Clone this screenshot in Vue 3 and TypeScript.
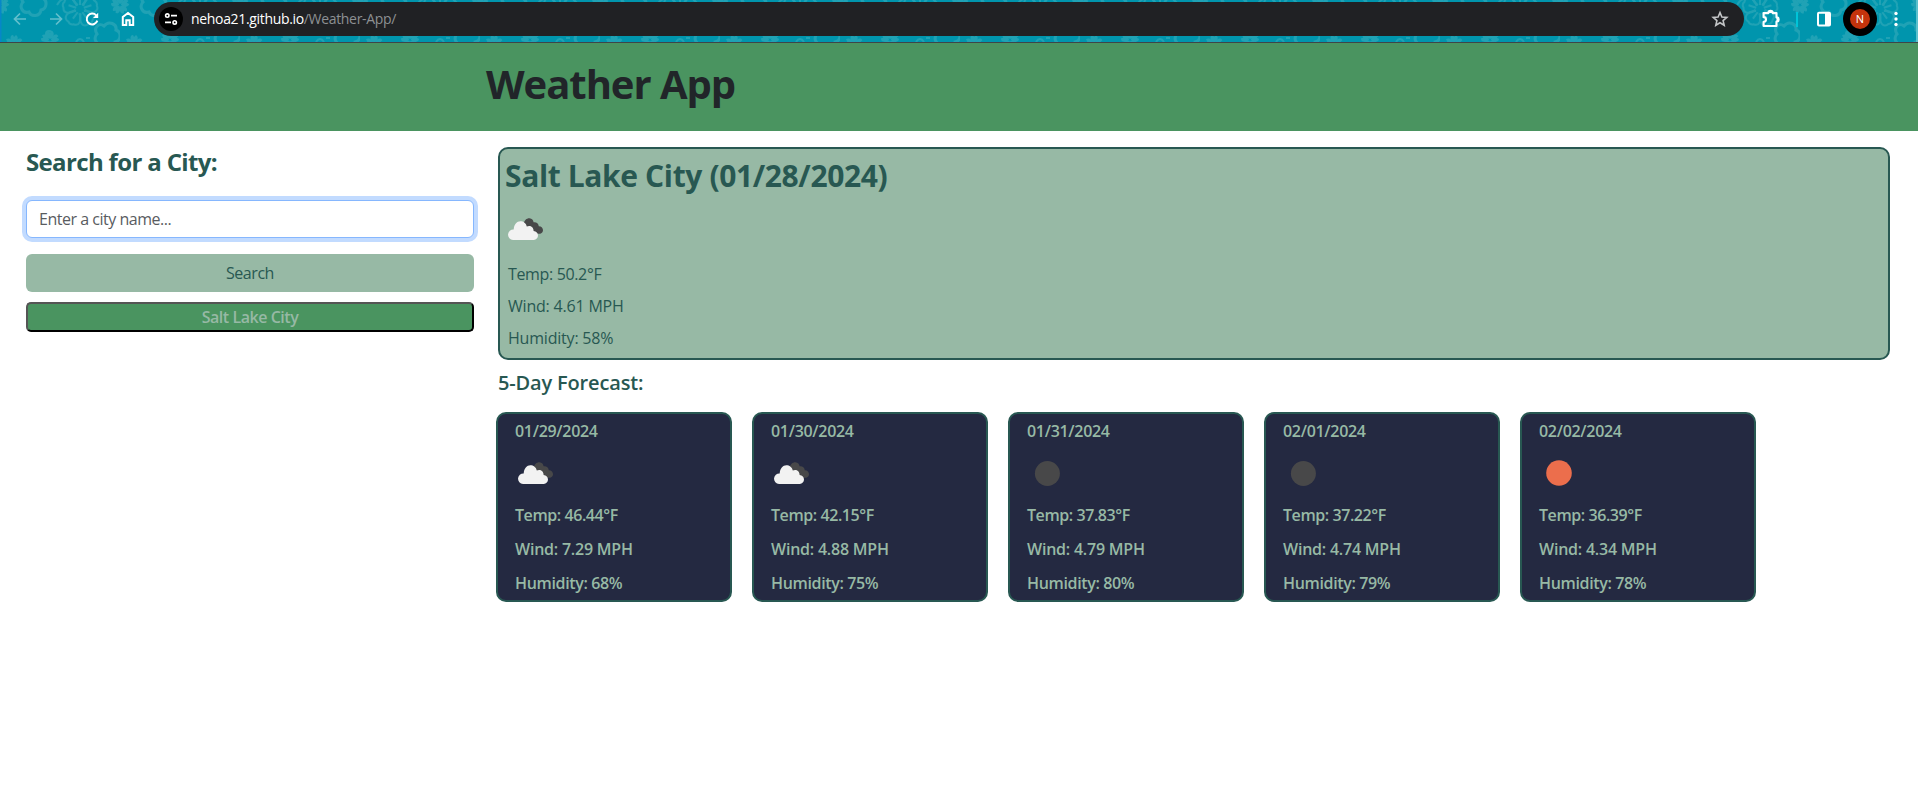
<script setup lang="ts">
interface Reading {
  date: string
  icon: 'clouds' | 'night' | 'day'
  temp: string
  wind: string
  humidity: string
}

const current = { city: 'Salt Lake City', date: '01/28/2024', temp: '50.2', wind: '4.61', humidity: '58' }

const forecast: Reading[] = [
  { date: '01/29/2024', icon: 'clouds', temp: '46.44', wind: '7.29', humidity: '68' },
  { date: '01/30/2024', icon: 'clouds', temp: '42.15', wind: '4.88', humidity: '75' },
  { date: '01/31/2024', icon: 'night', temp: '37.83', wind: '4.79', humidity: '80' },
  { date: '02/01/2024', icon: 'night', temp: '37.22', wind: '4.74', humidity: '79' },
  { date: '02/02/2024', icon: 'day', temp: '36.39', wind: '4.34', humidity: '78' },
]

const petals = [0, 72, 144, 216, 288]
</script>

<template>
  <div class="page">
    <div class="toolbar">
      <svg class="floral" width="1918" height="42" aria-hidden="true">
        <defs>
          <g id="hibiscus" fill="none" stroke="#20a2b5" stroke-width="2">
            <path v-for="a in petals" :key="a" :transform="`rotate(${a})`" d="M-2-4C-9-8-9-15-4-16Q-1-19 2-17C8-18 10-10 2-4M0-4V-12" />
          </g>
          <g id="blossom" fill="none" stroke="#20a2b5" stroke-width="3">
            <path d="M-3-10C2-16 10-12 9-6C15-4 14 5 8 6C7 13-2 13-4 8C-11 10-14 2-10-2C-14-8-8-14-3-10Z" />
          </g>
          <g id="sprig" fill="#20a2b5">
            <path v-for="a in petals" :key="a" :transform="`rotate(${a})`" d="M0-1C-5-4-4-9-1-9L0-7L2-9C5-7 4-3 0-1Z" />
          </g>
          <pattern id="print" width="120" height="42" patternUnits="userSpaceOnUse">
            <use href="#blossom" x="33" y="4" />
            <use href="#hibiscus" x="80" y="9" />
            <use href="#sprig" x="0" y="5" />
            <use href="#sprig" x="120" y="5" />
            <use href="#blossom" x="107" y="36" />
            <use href="#sprig" x="50" y="40" />
            <use href="#sprig" x="14" y="44" />
            <circle cx="49" cy="34" r="3" fill="none" stroke="#20a2b5" stroke-width="2" />
            <path d="M76 42q4-6 8 0M57 5q3-5 6-6M86 38h4" fill="none" stroke="#20a2b5" stroke-width="2" />
          </pattern>
        </defs>
        <rect width="1918" height="42" fill="#0095ad" />
        <rect width="1918" height="42" fill="url(#print)" />
        <rect width="1.5" height="42" fill="#0787c8" />
        <rect x="1916" width="2" height="42" fill="#5bc0cc" />
      </svg>

      <div class="nav">
        <svg class="dim" width="16" height="16" viewBox="0 0 16 16"><path d="M14 8H3M8 2.5L2.5 8L8 13.5" /></svg>
        <svg class="dim" width="16" height="16" viewBox="0 0 16 16"><path d="M2 8H13M8 2.5L13.5 8L8 13.5" /></svg>
        <svg width="16" height="16" viewBox="0 0 16 16">
          <path d="M13.3 9.6A5.4 5.4 0 1 1 12.2 4.4L13.4 5.8" stroke-width="2" />
          <path d="M14.2 1.8V7H9Z" fill="#fff" stroke="none" />
        </svg>
        <svg width="16" height="16" viewBox="0 0 16 16"><path d="M2.8 14V6L8 2L13.2 6V14H9.7V9.2H6.3V14Z" stroke-width="2" /></svg>
      </div>

      <div class="address">
        <span class="site">
          <svg width="14" height="14" viewBox="0 0 14 14" fill="none" stroke="#fff" stroke-width="1.6">
            <circle cx="3.3" cy="3.6" r="1.7" /><path d="M7 3.6H13M1 10.4H7" /><circle cx="10.7" cy="10.4" r="1.7" />
          </svg>
        </span>
        <span class="url"><b>nehoa21.github.io</b><i>/Weather-App/</i></span>
        <svg class="star" width="18" height="18" viewBox="0 0 18 18">
          <path d="M9 2.5L10.9 7L15.8 7.4L12.1 10.6L13.2 15.3L9 12.8L4.8 15.3L5.9 10.6L2.2 7.4L7.1 7Z" fill="none" stroke="#c4c6c8" stroke-width="1.6" />
        </svg>
      </div>

      <div class="actions">
        <svg width="20" height="20" viewBox="0.6 1.2 18.6 18.6">
          <path d="M3 5H7.5A2 2 0 0 1 11.5 5H15V9A2 2 0 0 1 15 13V17H3V13.2A2.2 2.2 0 0 0 3 8.8Z" fill="none" stroke="#fff" stroke-width="2" stroke-linejoin="round" />
          <path d="M7.5 5a2 2 0 0 1 4 0zM15 9a2 2 0 0 1 0 4z" fill="#fff" />
        </svg>
        <span class="divider"></span>
        <svg width="16" height="16" viewBox="0 0 16 16">
          <rect x="2" y="1.8" width="12" height="12.6" rx="1" fill="none" stroke="#fff" stroke-width="2" /><path d="M9 2H14V14H9Z" fill="#fff" />
        </svg>
        <span class="profile"><span>N</span></span>
        <svg width="4" height="16" viewBox="0 0 4 16" fill="#fff"><circle cx="2" cy="2.5" r="1.7" /><circle cx="2" cy="8" r="1.7" /><circle cx="2" cy="13.5" r="1.7" /></svg>
      </div>
    </div>

    <header class="banner"><h1>Weather App</h1></header>

    <svg width="0" height="0" class="defs" aria-hidden="true">
      <defs>
        <g id="clouds">
          <path d="M15.5 6.5C16 2 19 0 21.5.2C24 .4 25.3 2 25.6 4.3C28 3.8 30.5 5.2 30.8 8.2C33.5 8.2 35.2 10.3 35 12.4C34.8 14.8 32.5 16.2 29.8 15.8L15.5 12Z" fill="#484849" />
          <path d="M5 22A5.3 5.3 0 0 1 5.7 11.4C5.9 6.5 9 3.2 12.3 3.2C15.5 3.2 18.2 5.2 18.8 8.6C22 7 25.6 9 25.6 13C28.3 13 30 15.2 30 17.6C30 20 28.2 22 25.8 22Z" fill="#f2f2f2" />
        </g>
      </defs>
    </svg>

    <main class="content">
      <aside class="search">
        <h2>Search for a City:</h2>
        <input type="text" placeholder="Enter a city name..." />
        <button class="submit" type="button">Search</button>
        <button class="history" type="button">Salt Lake City</button>
      </aside>

      <section class="results">
        <article class="today">
          <h2>{{ current.city }} ({{ current.date }})</h2>
          <svg class="icon" width="36" height="23"><use href="#clouds" /></svg>
          <p class="temp">Temp: {{ current.temp }}°F</p>
          <p class="wind">Wind: {{ current.wind }} MPH</p>
          <p class="humidity">Humidity: {{ current.humidity }}%</p>
        </article>
        <h3>5-Day Forecast:</h3>
        <div class="days">
          <article v-for="day in forecast" :key="day.date" class="day">
            <p class="date">{{ day.date }}</p>
            <svg class="icon" width="36" height="28">
              <use v-if="day.icon === 'clouds'" href="#clouds" y="2" />
              <circle v-else-if="day.icon === 'night'" cx="17.4" cy="13.5" r="12.5" fill="#484849" />
              <circle v-else cx="17" cy="13" r="12.8" fill="#ec6e4c" />
            </svg>
            <p class="temp">Temp: {{ day.temp }}°F</p>
            <p class="wind">Wind: {{ day.wind }} MPH</p>
            <p class="humidity">Humidity: {{ day.humidity }}%</p>
          </article>
        </div>
      </section>
    </main>
  </div>
</template>

<style>
body { margin: 0; background: #fff; }
</style>

<style scoped>
* { box-sizing: border-box; }
.page { height: 793px; overflow: hidden; font-family: "Open Sans", "Noto Sans", sans-serif; font-size: 16px; line-height: 24px; color: #285852; background: #fff; }
h1, h2, h3, p { margin: 0; white-space: nowrap; }
.defs { position: absolute; }

.toolbar { position: relative; display: flex; align-items: flex-start; height: 43px; border-bottom: 1px solid #3f4548; background: #0095ad; }
.floral { position: absolute; left: 0; top: 0; }
.nav, .address, .actions { position: relative; display: flex; align-items: center; }
.nav { gap: 20px; width: 154px; height: 38px; padding-left: 12px; }
.nav svg { fill: none; stroke: #fff; stroke-width: 1.8; }
.nav .dim { stroke: #62bfcc; stroke-width: 1.7; }
.address { width: 1590px; height: 34px; margin-top: 2px; padding: 0 15px 0 5px; border-radius: 17px; background: #202124; }
.site { display: flex; align-items: center; justify-content: center; width: 24px; height: 24px; border-radius: 12px; background: #000; }
.url { flex: 1; margin-left: 8px; font-size: 14px; line-height: 20px; letter-spacing: -0.33px; }
.url b { font-weight: 400; color: #fff; }
.url i { font-style: normal; color: #8d9093; }
.actions { flex: 1; height: 38px; padding-left: 17px; }
.actions > * { flex-shrink: 0; }
.divider { width: 2px; height: 15px; margin: 0 18px 0 15px; background: #00c4d8; }
.profile { display: flex; align-items: center; justify-content: center; width: 34px; height: 34px; margin: 0 17px 0 11px; border-radius: 17px; background: #000; }
.profile span { width: 20px; height: 20px; border-radius: 10px; background: #c5330c; color: #fff; font-size: 11px; line-height: 20px; text-align: center; }

.banner { height: 88px; padding: 17px 0 0 486px; background: #4a9460; }
.banner h1 { font-size: 40px; line-height: 48px; font-weight: 700; letter-spacing: -1.05px; color: #212529; }

.content { display: flex; }
.search { display: flex; flex-direction: column; width: 474px; padding: 16px 0 0 26px; }
.search h2 { font-size: 24px; line-height: 29px; font-weight: 700; letter-spacing: -0.65px; }
.search input { height: 38px; margin-top: 24px; padding: 6px 12px; border: 1px solid #86b7fe; border-radius: 6px; outline: none; box-shadow: 0 0 0 4px #c2dbff; background: #fff; font: 16px/24px "Open Sans", sans-serif; letter-spacing: -0.48px; }
.search input::placeholder { color: #595c5f; opacity: 1; }
.search button { font-family: inherit; font-size: 16px; line-height: 24px; padding: 0; letter-spacing: -0.45px; }
.submit { height: 38px; margin-top: 16px; border: 0; border-radius: 6px; background: #97b9a5; color: #285852; font-weight: 500; }
.history { height: 30px; margin-top: 10px; border: 2px solid; border-color: #555 #000 #000 #555; border-radius: 5px; background: #4a9460; color: #97b9a5; font-weight: 600; }

.results { width: 1416px; padding: 16px 0 0 24px; }
.today { height: 213px; padding: 8px 0 0 5px; border: 2px solid #285852; border-radius: 10px; background: #97b9a5; }
.today h2 { font-size: 30px; line-height: 38px; font-weight: 700; letter-spacing: -0.37px; }
.today .icon { display: block; margin: 23px 0 0 3px; }
.today p { margin: 8px 0 0 3px; font-weight: 500; letter-spacing: -0.2px; }
.today .temp { margin-top: 21px; letter-spacing: -0.35px; }
.results h3 { margin-top: 11px; font-size: 20px; line-height: 24px; font-weight: 600; letter-spacing: -0.16px; }
.days { display: flex; gap: 20px; margin: 17px 0 0 -2px; }
.day { width: 236px; height: 190px; padding: 5px 0 0 17px; border: 2px solid #285852; border-radius: 10px; background: #242941; color: #97b9a5; font-weight: 600; }
.day .icon { display: block; margin: 17px 0 0 3px; }
.day p { margin-top: 10px; letter-spacing: -0.35px; }
.day .date { margin-top: 0; letter-spacing: -0.3px; }
.day .temp { margin-top: 15px; letter-spacing: -0.43px; }
.day .wind { letter-spacing: -0.22px; }
</style>
